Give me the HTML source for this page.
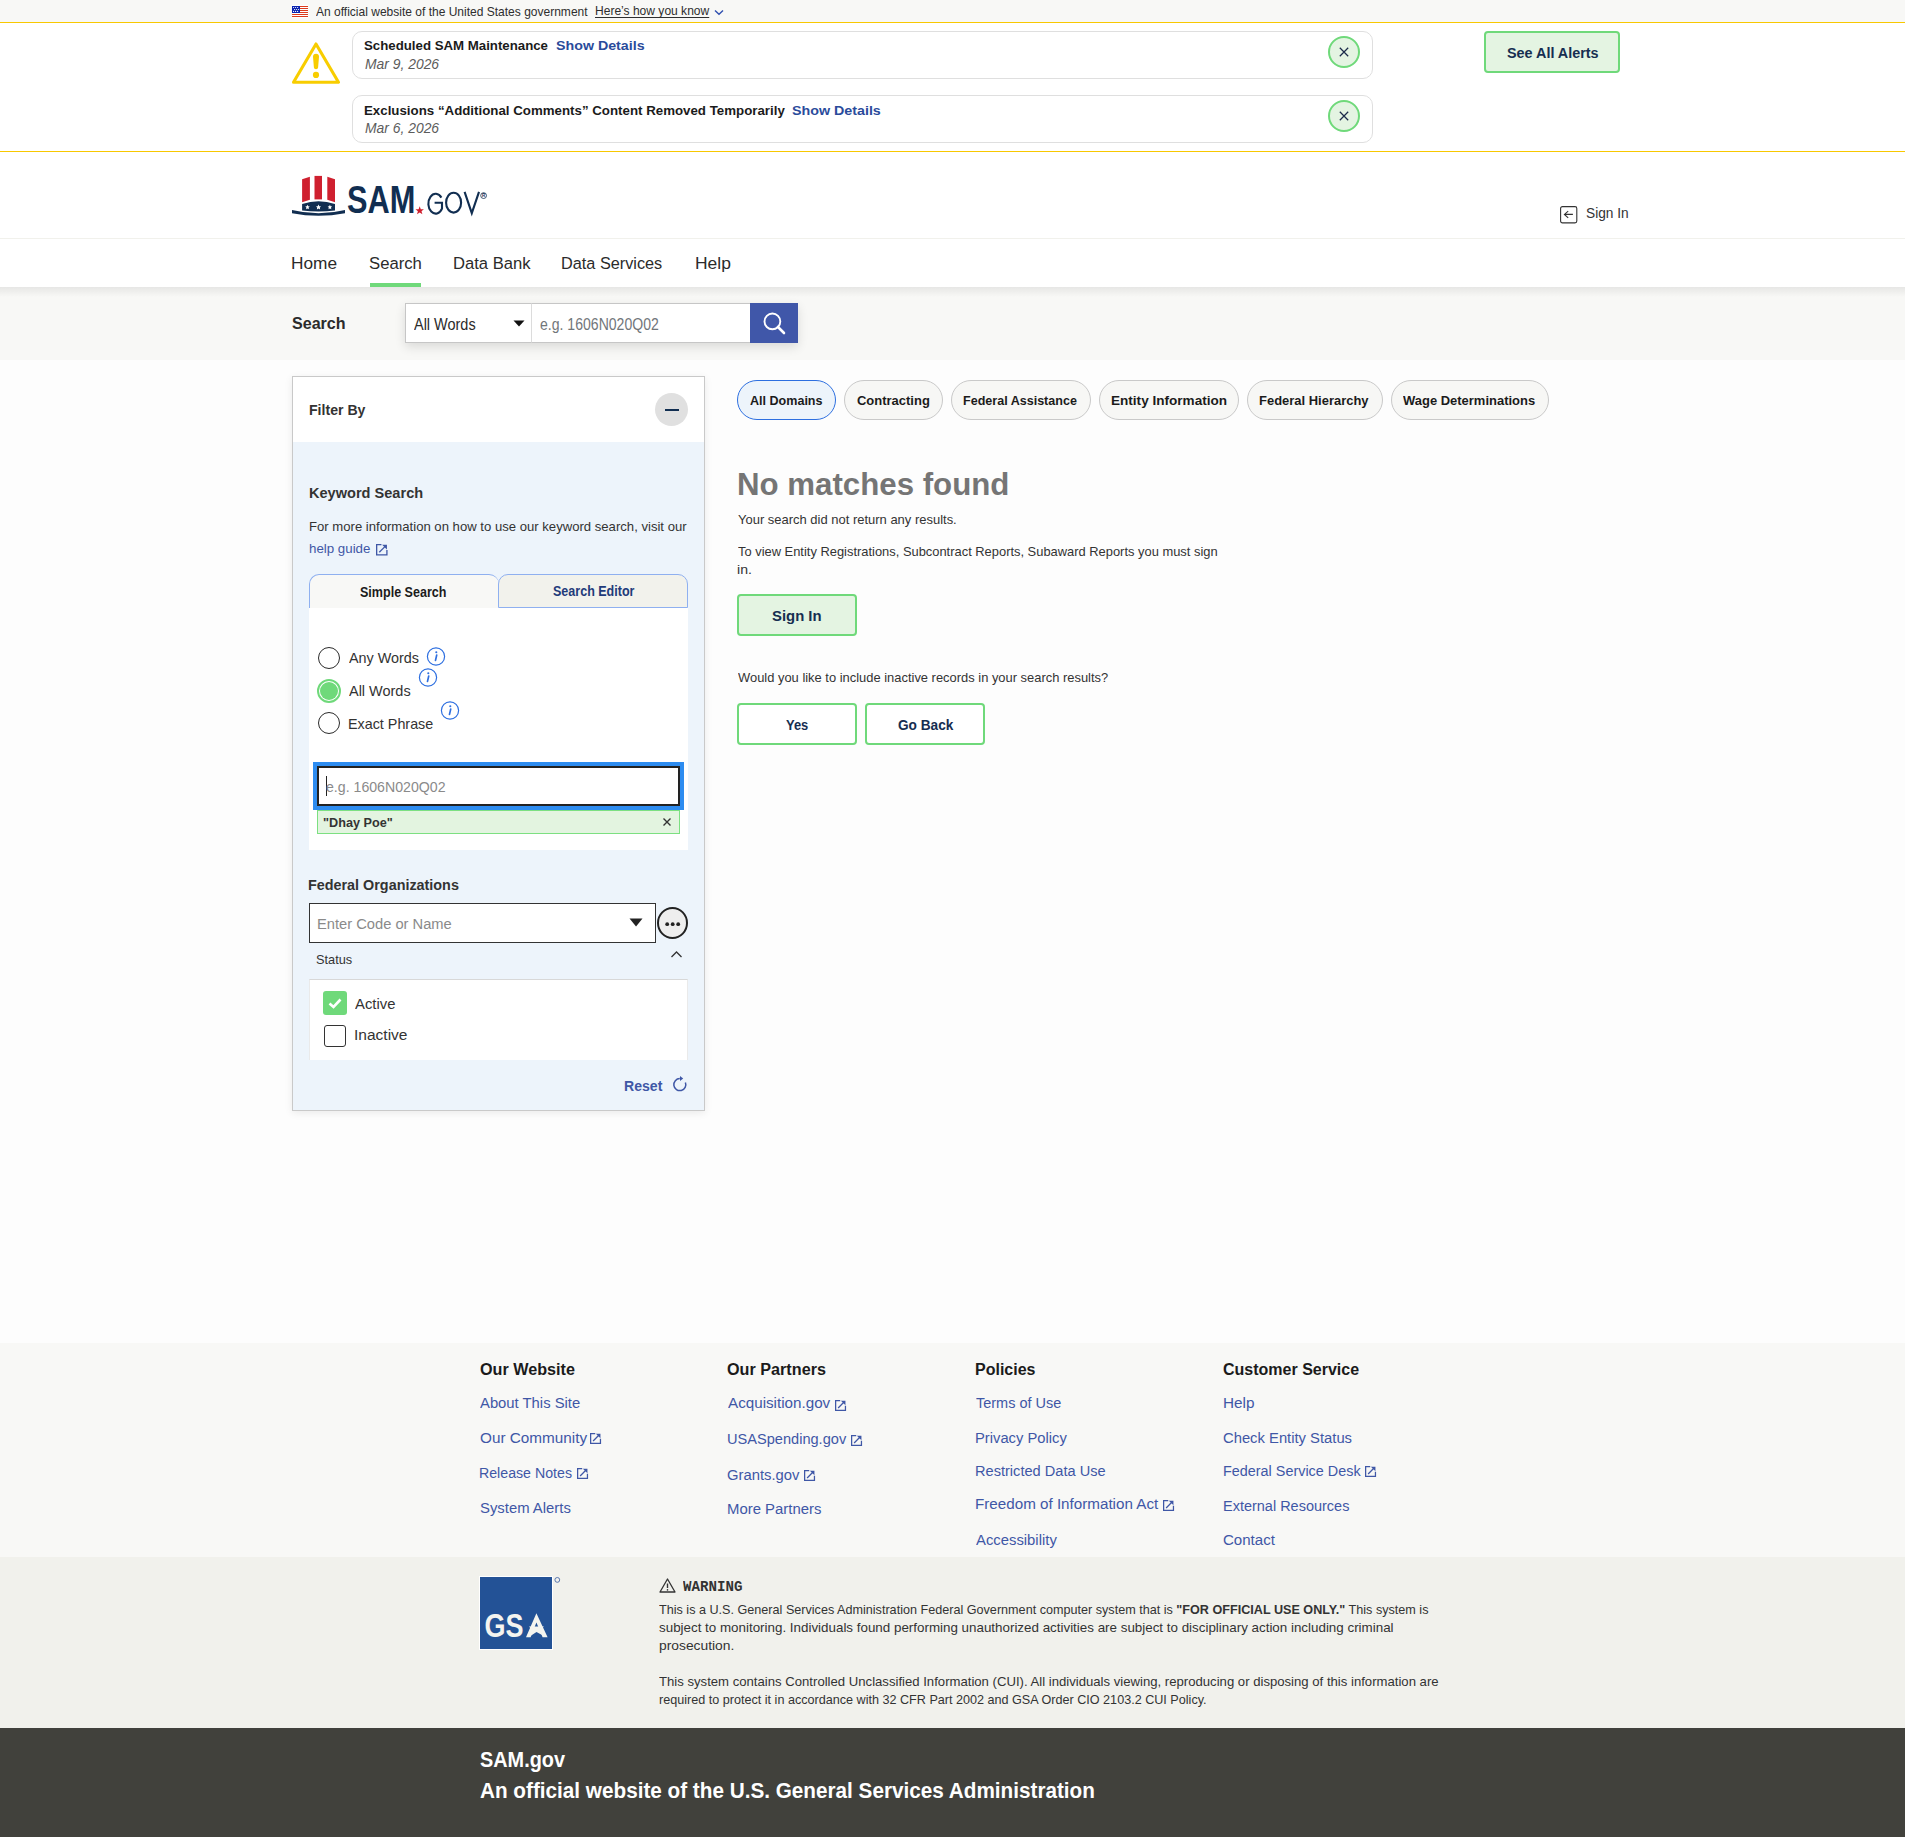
<!DOCTYPE html>
<html><head><meta charset="utf-8"><title>SAM.gov Search</title>
<style>
html,body{margin:0;padding:0;background:#fff;}
body{width:1905px;height:1837px;position:relative;overflow:hidden;font-family:"Liberation Sans",sans-serif;}
.t{position:absolute;white-space:nowrap;transform-origin:0 0;font-family:"Liberation Sans",sans-serif;}
.b{position:absolute;box-sizing:border-box;}
svg{position:absolute;overflow:visible;}
</style></head><body>
<!-- banner -->
<div class="b" style="left:0;top:0;width:1905px;height:22px;background:#f8f8f6;"></div>
<div class="b" style="left:0;top:22px;width:1905px;height:1px;background:#f8c800;"></div>
<svg style="left:292px;top:5px" width="16" height="13" viewBox="0 0 16 13">
 <rect width="16" height="13" fill="#fff"/>
 <g fill="#dc3a1c"><rect y="1" width="16" height="1"/><rect y="3" width="16" height="1"/><rect y="5" width="16" height="1"/><rect y="7" width="16" height="1"/><rect y="9" width="16" height="1"/><rect y="11" width="16" height="1"/></g>
 <rect y="1" width="8" height="7" fill="#0a24b0"/>
 <g fill="#fff"><circle cx="1.6" cy="2.5" r=".6"/><circle cx="3.6" cy="2.5" r=".6"/><circle cx="5.6" cy="2.5" r=".6"/><circle cx="2.6" cy="4.5" r=".6"/><circle cx="4.6" cy="4.5" r=".6"/><circle cx="6.6" cy="4.5" r=".6"/><circle cx="1.6" cy="6.4" r=".6"/><circle cx="3.6" cy="6.4" r=".6"/><circle cx="5.6" cy="6.4" r=".6"/></g>
</svg>
<svg style="left:714px;top:9px" width="10" height="7" viewBox="0 0 10 7"><path d="M1 1.5 L5 5.3 L9 1.5" fill="none" stroke="#3050b0" stroke-width="1.4"/></svg>
<!-- alerts -->
<div class="b" style="left:0;top:151px;width:1905px;height:1px;background:#f8c800;"></div>
<svg style="left:291px;top:41px" width="50" height="44" viewBox="0 0 50 44"><path d="M25 3 L47.5 41.2 L2.5 41.2 Z" fill="none" stroke="#f8cd00" stroke-width="3.1" stroke-linejoin="round"/><path d="M22 15.8 Q22 12.8 25 12.8 Q28 12.8 28 15.8 L27.1 26.6 Q27 28.2 25 28.2 Q23 28.2 22.9 26.6 Z" fill="#f8cd00"/><circle cx="25" cy="33.9" r="3.1" fill="#f8cd00"/></svg>
<div class="b" style="left:352px;top:31px;width:1021px;height:48px;border:1px solid #dfdfdf;border-radius:10px;"></div>
<div class="b" style="left:352px;top:95px;width:1021px;height:48px;border:1px solid #dfdfdf;border-radius:10px;"></div>
<div class="b" style="left:1328px;top:36px;width:32px;height:32px;border:2px solid #6fd97a;border-radius:50%;background:#e4f4e2;"></div>
<div class="b" style="left:1328px;top:100px;width:32px;height:32px;border:2px solid #6fd97a;border-radius:50%;background:#e4f4e2;"></div>
<svg style="left:1338px;top:46px" width="12" height="12" viewBox="0 0 12 12"><path d="M1.8 1.8 L10.2 10.2 M10.2 1.8 L1.8 10.2" stroke="#1b2a4a" stroke-width="1.25"/></svg>
<svg style="left:1338px;top:110px" width="12" height="12" viewBox="0 0 12 12"><path d="M1.8 1.8 L10.2 10.2 M10.2 1.8 L1.8 10.2" stroke="#1b2a4a" stroke-width="1.25"/></svg>
<div class="b" style="left:1484px;top:31px;width:136px;height:42px;border:2px solid #6fd97a;border-radius:4px;background:#e4f4e2;"></div>
<!-- header -->
<div class="b" style="left:0;top:238px;width:1905px;height:1px;background:#f1f1ec;"></div>
<div class="b" style="left:0;top:287px;width:1905px;height:73px;background:#f8f8f6;"></div>
<div class="b" style="left:0;top:287px;width:1905px;height:10px;background:linear-gradient(rgba(0,0,0,0.07),rgba(0,0,0,0));"></div>
<div class="b" style="left:370px;top:283px;width:51px;height:4px;background:#6fd97a;"></div>
<!-- logo -->
<svg style="left:288px;top:170px" width="140" height="52" viewBox="0 0 140 52">
 <path d="M14.1 9.2 L21.9 6.8 L21.9 29.8 L14.1 32.3 Z" fill="#cf202f"/>
 <path d="M26.5 5.9 L34 5.9 L34 29.4 L26.5 29.4 Z" fill="#cf202f"/>
 <path d="M39.3 6.8 L47 9.2 L47 32.3 L39.3 29.8 Z" fill="#cf202f"/>
 <path d="M14.1 34 Q30.5 28.5 47 34 L47 40.6 Q30.5 42.5 14.1 40.6 Z" fill="#112e51"/>
 <path d="M4 40 Q30.5 46.5 57 40 L57 43.2 Q30.5 48.5 4 43.2 Z" fill="#112e51"/>
 <g fill="#fff"><path d="M19.5 34.8 l.7 1.5 1.6.2 -1.2 1.1 .3 1.6 -1.4-.8 -1.4.8 .3-1.6 -1.2-1.1 1.6-.2z"/><path d="M30.5 34.5 l.8 1.7 1.8.2 -1.3 1.2 .3 1.8 -1.6-.9 -1.6.9 .3-1.8 -1.3-1.2 1.8-.2z"/><path d="M41.9 34.8 l.7 1.5 1.6.2 -1.2 1.1 .3 1.6 -1.4-.8 -1.4.8 .3-1.6 -1.2-1.1 1.6-.2z"/></g>
 <path d="M131.7 36.3 l1.1 2.9 3.1.1 -2.4 1.9 .9 3 -2.7-1.7 -2.7 1.7 .9-3 -2.4-1.9 3.1-.1z" fill="#cf202f"/>
</svg>
<svg style="left:420px;top:185px" width="70" height="32" viewBox="0 0 70 32">
 <path d="M21.4 12.6 A7.3 9.9 0 1 0 22.0 23.6 V17.8 H14.6" fill="none" stroke="#112e51" stroke-width="2.1"/>
 <ellipse cx="33.6" cy="17.65" rx="7.5" ry="9.95" fill="none" stroke="#112e51" stroke-width="2.1"/>
 <path d="M44.6 6.8 L51.8 28.2 L59.0 6.8" fill="none" stroke="#112e51" stroke-width="2.1"/>
 <circle cx="63.6" cy="10.6" r="2.9" fill="none" stroke="#112e51" stroke-width=".8"/>
 <text x="63.6" y="12.3" text-anchor="middle" font-family="Liberation Sans" font-size="4.6" font-weight="700" fill="#112e51">R</text>
</svg>
<!-- sign in icon -->
<svg style="left:1559px;top:205px" width="20" height="19" viewBox="0 0 20 19"><rect x="1.6" y="1.6" width="16.2" height="16.3" rx="1.8" fill="none" stroke="#333" stroke-width="1.1"/><path d="M13.9 9.4 H5.4 M9.2 6.1 L5.4 9.4 L9.2 12.9" fill="none" stroke="#333" stroke-width="1.1"/></svg>
<!-- search band -->
<div class="b" style="left:405px;top:303px;width:393px;height:40px;box-shadow:0 4px 10px rgba(0,0,0,0.12);"></div>
<div class="b" style="left:405px;top:303px;width:127px;height:40px;border:1px solid #c6c6c6;background:#fff;"></div>
<div class="b" style="left:531px;top:303px;width:220px;height:40px;border:1px solid #c6c6c6;border-left:1px solid #dcdcdc;background:#fff;"></div>
<svg style="left:513px;top:320px" width="12" height="7" viewBox="0 0 12 7"><path d="M0.5 0.5 L11.5 0.5 L6 6.5 Z" fill="#111"/></svg>
<div class="b" style="left:750px;top:303px;width:48px;height:40px;background:#4057a9;"></div>
<svg style="left:755px;top:308px" width="40" height="30" viewBox="0 0 40 30"><circle cx="17.4" cy="13.4" r="7.9" fill="none" stroke="#fff" stroke-width="1.9"/><path d="M23 19 L29 25" stroke="#fff" stroke-width="2.6" stroke-linecap="round"/></svg>
<div class="b" style="left:0;top:360px;width:1905px;height:983px;background:#fdfdfd;"></div>
<!-- filter panel -->
<div class="b" style="left:292px;top:376px;width:413px;height:735px;border:1px solid #c9c9c9;background:#edf4fb;box-shadow:0 2px 8px rgba(0,0,0,0.08);"></div>
<div class="b" style="left:293px;top:377px;width:411px;height:65px;background:#fff;"></div>
<div class="b" style="left:655px;top:393px;width:33px;height:33px;border-radius:50%;background:#e0e0e0;"></div>
<div class="b" style="left:665px;top:409px;width:14px;height:2px;background:#112e51;"></div>
<!-- tabs -->
<div class="b" style="left:309px;top:574px;width:190px;height:36px;background:#f8f8f6;border:1px solid #8fb0f0;border-bottom:none;border-right:none;border-radius:10px 10px 0 0;"></div>
<div class="b" style="left:498px;top:574px;width:190px;height:34px;background:#f2f2ec;border:1px solid #8fb0f0;border-radius:10px 10px 0 0;"></div>
<div class="b" style="left:309px;top:608px;width:379px;height:242px;background:#fff;"></div>
<!-- radios -->
<div class="b" style="left:318px;top:647px;width:22px;height:22px;border:1.5px solid #2b2b2b;border-radius:50%;"></div>
<div class="b" style="left:317px;top:679px;width:24px;height:24px;border:2px solid #6fd97a;border-radius:50%;background:#fff;"></div>
<div class="b" style="left:320px;top:682px;width:18px;height:18px;border-radius:50%;background:#6fd97a;"></div>
<div class="b" style="left:318px;top:712px;width:22px;height:22px;border:1.5px solid #2b2b2b;border-radius:50%;"></div>
<svg style="left:426px;top:647px" width="20" height="20" viewBox="0 0 20 20"><circle cx="10" cy="9.5" r="8.6" fill="none" stroke="#2e6fe0" stroke-width="1.2"/><circle cx="10.3" cy="5.2" r="1.05" fill="#2e6fe0"/><path d="M10.7 8.1 L9.5 13.4" stroke="#2e6fe0" stroke-width="1.7" stroke-linecap="round"/></svg>
<svg style="left:418px;top:668px" width="20" height="20" viewBox="0 0 20 20"><circle cx="10" cy="9.5" r="8.6" fill="none" stroke="#2e6fe0" stroke-width="1.2"/><circle cx="10.3" cy="5.2" r="1.05" fill="#2e6fe0"/><path d="M10.7 8.1 L9.5 13.4" stroke="#2e6fe0" stroke-width="1.7" stroke-linecap="round"/></svg>
<svg style="left:440px;top:701px" width="20" height="20" viewBox="0 0 20 20"><circle cx="10" cy="9.5" r="8.6" fill="none" stroke="#2e6fe0" stroke-width="1.2"/><circle cx="10.3" cy="5.2" r="1.05" fill="#2e6fe0"/><path d="M10.7 8.1 L9.5 13.4" stroke="#2e6fe0" stroke-width="1.7" stroke-linecap="round"/></svg>
<!-- focused input -->
<div class="b" style="left:313px;top:762px;width:371px;height:48px;background:#2d8cf0;"></div>
<div class="b" style="left:317px;top:766px;width:363px;height:40px;background:#fff;border:2px solid #222;"></div>
<div class="b" style="left:326px;top:776px;width:1px;height:20px;background:#222;"></div>
<div class="b" style="left:317px;top:810px;width:363px;height:24px;background:#e3f4e0;border:1px solid #7ce081;"></div>
<svg style="left:662px;top:817px" width="10" height="10" viewBox="0 0 10 10"><path d="M1.5 1.5 L8.5 8.5 M8.5 1.5 L1.5 8.5" stroke="#333" stroke-width="1.4"/></svg>
<!-- fed org -->
<div class="b" style="left:309px;top:903px;width:347px;height:40px;background:#fff;border:1.5px solid #333;"></div>
<svg style="left:629px;top:918px" width="14" height="9" viewBox="0 0 14 9"><path d="M0.5 0.5 L13.5 0.5 L7 8.5 Z" fill="#222"/></svg>
<div class="b" style="left:657px;top:907px;width:31px;height:32px;border:2px solid #222;border-radius:50%;background:#eeeeee;"></div>
<svg style="left:663px;top:920px" width="20" height="8" viewBox="0 0 20 8"><circle cx="4.2" cy="4.2" r="1.9" fill="#222"/><circle cx="9.7" cy="4.2" r="1.9" fill="#222"/><circle cx="15.2" cy="4.2" r="1.9" fill="#222"/></svg>
<svg style="left:670px;top:950px" width="13" height="9" viewBox="0 0 13 9"><path d="M1.5 7 L6.5 2 L11.5 7" fill="none" stroke="#333" stroke-width="1.3"/></svg>
<div class="b" style="left:309px;top:979px;width:379px;height:81px;background:#fff;border-top:1.5px solid #d8d8d8;border-left:1px solid #eaeaea;border-right:1px solid #eaeaea;"></div>
<div class="b" style="left:323px;top:991px;width:24px;height:24px;border-radius:3px;background:#6fd97a;"></div>
<svg style="left:323px;top:991px" width="24" height="24" viewBox="0 0 24 24"><path d="M6.5 12.5 L10.5 16 L17.5 8.5" fill="none" stroke="#fff" stroke-width="2.6"/></svg>
<div class="b" style="left:324px;top:1025px;width:22px;height:22px;border:1.5px solid #333;border-radius:3px;background:#fff;"></div>
<svg style="left:664px;top:1068px" width="30" height="30" viewBox="0 0 30 30"><path d="M21.4 14.4 A6 6 0 1 1 15.8 10.6" fill="none" stroke="#3f57a6" stroke-width="1.5"/><path d="M16 8 L19.2 10.6 L16 13.1 Z" fill="#3f57a6"/></svg>
<!-- help guide ext icon -->

<!-- chips -->
<div class="b" style="left:737px;top:380px;width:99px;height:40px;border:1.5px solid #2d6fe0;border-radius:20px;background:#edf4fb;"></div>
<div class="b" style="left:844px;top:380px;width:99px;height:40px;border:1px solid #c9c9c9;border-radius:20px;background:#f7f7f5;"></div>
<div class="b" style="left:951px;top:380px;width:140px;height:40px;border:1px solid #c9c9c9;border-radius:20px;background:#f7f7f5;"></div>
<div class="b" style="left:1099px;top:380px;width:140px;height:40px;border:1px solid #c9c9c9;border-radius:20px;background:#f7f7f5;"></div>
<div class="b" style="left:1247px;top:380px;width:136px;height:40px;border:1px solid #c9c9c9;border-radius:20px;background:#f7f7f5;"></div>
<div class="b" style="left:1391px;top:380px;width:158px;height:40px;border:1px solid #c9c9c9;border-radius:20px;background:#f7f7f5;"></div>
<!-- main buttons -->
<div class="b" style="left:737px;top:594px;width:120px;height:42px;border:2px solid #6fd97a;border-radius:4px;background:#e4f4e2;"></div>
<div class="b" style="left:737px;top:703px;width:120px;height:42px;border:2px solid #6fd97a;border-radius:4px;background:#fff;"></div>
<div class="b" style="left:865px;top:703px;width:120px;height:42px;border:2px solid #6fd97a;border-radius:4px;background:#fff;"></div>
<!-- footer -->
<div class="b" style="left:0;top:1343px;width:1905px;height:214px;background:#f8f8f6;"></div>
<div class="b" style="left:0;top:1557px;width:1905px;height:171px;background:#f1f1ec;"></div>
<div class="b" style="left:0;top:1728px;width:1905px;height:109px;background:#41413c;"></div>
<!-- ext link icons footer -->
<svg style="left:590px;top:1433px" width="11.5" height="11.5" viewBox="0 0 11 11"><path d="M5 0.6 H0.6 V10 H10 V5.6" fill="none" stroke="#3f57a6" stroke-width="1.2"/><path d="M3 7.6 L8.9 1.7" stroke="#3f57a6" stroke-width="1.2"/><path d="M5.6 0.6 H10 V5 Z" fill="#3f57a6"/></svg>
<svg style="left:577px;top:1468px" width="11.5" height="11.5" viewBox="0 0 11 11"><path d="M5 0.6 H0.6 V10 H10 V5.6" fill="none" stroke="#3f57a6" stroke-width="1.2"/><path d="M3 7.6 L8.9 1.7" stroke="#3f57a6" stroke-width="1.2"/><path d="M5.6 0.6 H10 V5 Z" fill="#3f57a6"/></svg>
<svg style="left:835px;top:1400px" width="11.5" height="11.5" viewBox="0 0 11 11"><path d="M5 0.6 H0.6 V10 H10 V5.6" fill="none" stroke="#3f57a6" stroke-width="1.2"/><path d="M3 7.6 L8.9 1.7" stroke="#3f57a6" stroke-width="1.2"/><path d="M5.6 0.6 H10 V5 Z" fill="#3f57a6"/></svg>
<svg style="left:851px;top:1435px" width="11.5" height="11.5" viewBox="0 0 11 11"><path d="M5 0.6 H0.6 V10 H10 V5.6" fill="none" stroke="#3f57a6" stroke-width="1.2"/><path d="M3 7.6 L8.9 1.7" stroke="#3f57a6" stroke-width="1.2"/><path d="M5.6 0.6 H10 V5 Z" fill="#3f57a6"/></svg>
<svg style="left:804px;top:1470px" width="11.5" height="11.5" viewBox="0 0 11 11"><path d="M5 0.6 H0.6 V10 H10 V5.6" fill="none" stroke="#3f57a6" stroke-width="1.2"/><path d="M3 7.6 L8.9 1.7" stroke="#3f57a6" stroke-width="1.2"/><path d="M5.6 0.6 H10 V5 Z" fill="#3f57a6"/></svg>
<svg style="left:1163px;top:1500px" width="11.5" height="11.5" viewBox="0 0 11 11"><path d="M5 0.6 H0.6 V10 H10 V5.6" fill="none" stroke="#3f57a6" stroke-width="1.2"/><path d="M3 7.6 L8.9 1.7" stroke="#3f57a6" stroke-width="1.2"/><path d="M5.6 0.6 H10 V5 Z" fill="#3f57a6"/></svg>
<svg style="left:1365px;top:1466px" width="11.5" height="11.5" viewBox="0 0 11 11"><path d="M5 0.6 H0.6 V10 H10 V5.6" fill="none" stroke="#3f57a6" stroke-width="1.2"/><path d="M3 7.6 L8.9 1.7" stroke="#3f57a6" stroke-width="1.2"/><path d="M5.6 0.6 H10 V5 Z" fill="#3f57a6"/></svg>
<svg style="left:375.5px;top:543.5px" width="12" height="12" viewBox="0 0 11 11"><path d="M5 0.6 H0.6 V10 H10 V5.6" fill="none" stroke="#3f57a6" stroke-width="1.2"/><path d="M3 7.6 L8.9 1.7" stroke="#3f57a6" stroke-width="1.2"/><path d="M5.6 0.6 H10 V5 Z" fill="#3f57a6"/></svg>
<!-- GSA logo -->
<div class="b" style="left:479px;top:1576px;width:74px;height:74px;background:#fff;"></div>
<div class="b" style="left:480px;top:1577px;width:72px;height:72px;background:#235296;"></div>
<svg style="left:480px;top:1577px" width="82" height="72" viewBox="0 0 82 72">
 <text x="4.6" y="60.2" font-family="Liberation Sans" font-weight="700" font-size="33.5" fill="#f4f4ef" textLength="39" lengthAdjust="spacingAndGlyphs">GS</text>
 <path d="M56.4 36.2 L67.6 60.2 L62.6 60.2 L56.4 45.5 L50.6 60.2 L46 60.2 Z" fill="#f4f4ef"/>
 <path d="M49 49.5 L64 49.5 L60.5 52.8 L62 58 L56.5 55 L48.5 60.2 L52 53 Z" fill="#f4f4ef"/>
 <circle cx="77.3" cy="2.9" r="2.4" fill="none" stroke="#4a6aa8" stroke-width=".9"/>
</svg>
<svg style="left:659px;top:1578px" width="17" height="15" viewBox="0 0 17 15"><path d="M8.5 1 L16 14 L1 14 Z" fill="none" stroke="#333" stroke-width="1.3" stroke-linejoin="round"/><path d="M8.5 5.5 V10" stroke="#333" stroke-width="1.4"/><circle cx="8.5" cy="11.9" r=".8" fill="#333"/></svg>

<span class="t" id="t0" style="left:316.00px;top:6.16px;font-size:12.8px;line-height:12.8px;font-weight:400;color:#2e2e2e;transform:scaleX(0.9388);">An official website of the United States government</span>
<span class="t" id="t1" style="left:595.06px;top:5.36px;font-size:12.8px;line-height:12.8px;font-weight:400;color:#2e2e2e;transform:scaleX(0.9410);text-decoration:underline;text-underline-offset:1.5px;">Here’s how you know</span>
<span class="t" id="t2" style="left:363.99px;top:39.28px;font-size:13.6px;line-height:13.6px;font-weight:700;color:#1b1b1b;transform:scaleX(0.9743);">Scheduled SAM Maintenance</span>
<span class="t" id="t3" style="left:556.19px;top:39.28px;font-size:13.6px;line-height:13.6px;font-weight:700;color:#2a4b9b;transform:scaleX(1.0472);">Show Details</span>
<span class="t" id="t4" style="left:365.00px;top:57.92px;font-size:13.8px;line-height:13.8px;font-weight:400;color:#5c5c5c;transform:scaleX(1.0062);font-style:italic;">Mar 9, 2026</span>
<span class="t" id="t5" style="left:364.00px;top:104.48px;font-size:13.6px;line-height:13.6px;font-weight:700;color:#1b1b1b;transform:scaleX(0.9779);">Exclusions “Additional Comments” Content Removed Temporarily</span>
<span class="t" id="t6" style="left:791.80px;top:104.48px;font-size:13.6px;line-height:13.6px;font-weight:700;color:#2a4b9b;transform:scaleX(1.0495);">Show Details</span>
<span class="t" id="t7" style="left:365.00px;top:121.92px;font-size:13.8px;line-height:13.8px;font-weight:400;color:#5c5c5c;transform:scaleX(1.0062);font-style:italic;">Mar 6, 2026</span>
<span class="t" id="t8" style="left:1507.20px;top:46.26px;font-size:14.1px;line-height:14.1px;font-weight:700;color:#162e51;transform:scaleX(1.0197);">See All Alerts</span>
<span class="t" id="t9" style="left:1585.58px;top:205.67px;font-size:14.8px;line-height:14.8px;font-weight:400;color:#333;transform:scaleX(0.9258);">Sign In</span>
<span class="t" id="t10" style="left:291.41px;top:255.27px;font-size:17.4px;line-height:17.4px;font-weight:400;color:#2b2b2b;transform:scaleX(0.9931);">Home</span>
<span class="t" id="t11" style="left:368.97px;top:255.27px;font-size:17.4px;line-height:17.4px;font-weight:400;color:#2b2b2b;transform:scaleX(0.9596);">Search</span>
<span class="t" id="t12" style="left:453.25px;top:255.27px;font-size:17.4px;line-height:17.4px;font-weight:400;color:#2b2b2b;transform:scaleX(0.9540);">Data Bank</span>
<span class="t" id="t13" style="left:561.47px;top:255.27px;font-size:17.4px;line-height:17.4px;font-weight:400;color:#2b2b2b;transform:scaleX(0.9354);">Data Services</span>
<span class="t" id="t14" style="left:694.81px;top:255.27px;font-size:17.4px;line-height:17.4px;font-weight:400;color:#2b2b2b;transform:scaleX(1.0034);">Help</span>
<span class="t" id="t15" style="left:292.16px;top:315.41px;font-size:17px;line-height:17px;font-weight:700;color:#2b2b2b;transform:scaleX(0.9456);">Search</span>
<span class="t" id="t16" style="left:414.21px;top:316.59px;font-size:15.6px;line-height:15.6px;font-weight:400;color:#2b2b2b;transform:scaleX(0.9275);">All Words</span>
<span class="t" id="t17" style="left:540.40px;top:316.59px;font-size:15.6px;line-height:15.6px;font-weight:400;color:#71767a;transform:scaleX(0.9015);">e.g. 1606N020Q02</span>
<span class="t" id="t18" style="left:308.79px;top:403.41px;font-size:14.4px;line-height:14.4px;font-weight:700;color:#333;transform:scaleX(0.9799);">Filter By</span>
<span class="t" id="t19" style="left:308.63px;top:484.90px;font-size:15px;line-height:15px;font-weight:700;color:#333;transform:scaleX(0.9709);">Keyword Search</span>
<span class="t" id="t20" style="left:308.61px;top:520.34px;font-size:13.3px;line-height:13.3px;font-weight:400;color:#333;transform:scaleX(0.9864);">For more information on how to use our keyword search, visit our</span>
<span class="t" id="t21" style="left:308.59px;top:541.74px;font-size:13.3px;line-height:13.3px;font-weight:400;color:#3f57a6;transform:scaleX(1.0006);">help guide</span>
<span class="t" id="t22" style="left:360.20px;top:586.32px;font-size:13.8px;line-height:13.8px;font-weight:700;color:#1b1b1b;transform:scaleX(0.9085);">Simple Search</span>
<span class="t" id="t23" style="left:552.60px;top:585.32px;font-size:13.8px;line-height:13.8px;font-weight:700;color:#1f3b7a;transform:scaleX(0.9078);">Search Editor</span>
<span class="t" id="t24" style="left:349.20px;top:650.52px;font-size:14.5px;line-height:14.5px;font-weight:400;color:#333;transform:scaleX(0.9916);">Any Words</span>
<span class="t" id="t25" style="left:349.21px;top:683.52px;font-size:14.5px;line-height:14.5px;font-weight:400;color:#333;transform:scaleX(0.9981);">All Words</span>
<span class="t" id="t26" style="left:348.21px;top:716.72px;font-size:14.5px;line-height:14.5px;font-weight:400;color:#333;transform:scaleX(0.9887);">Exact Phrase</span>
<span class="t" id="t27" style="left:325.80px;top:779.30px;font-size:15px;line-height:15px;font-weight:400;color:#8a8a8a;transform:scaleX(0.9429);">e.g. 1606N020Q02</span>
<span class="t" id="t28" style="left:322.59px;top:816.88px;font-size:12.9px;line-height:12.9px;font-weight:700;color:#333;transform:scaleX(0.9827);">&quot;Dhay Poe&quot;</span>
<span class="t" id="t29" style="left:308.19px;top:877.72px;font-size:14.5px;line-height:14.5px;font-weight:700;color:#333;transform:scaleX(0.9908);">Federal Organizations</span>
<span class="t" id="t30" style="left:317.25px;top:916.08px;font-size:15.5px;line-height:15.5px;font-weight:400;color:#8a8a8a;transform:scaleX(0.9479);">Enter Code or Name</span>
<span class="t" id="t31" style="left:316.35px;top:952.99px;font-size:13px;line-height:13px;font-weight:400;color:#333;transform:scaleX(0.9813);">Status</span>
<span class="t" id="t32" style="left:355.00px;top:996.13px;font-size:15.2px;line-height:15.2px;font-weight:400;color:#333;transform:scaleX(0.9777);">Active</span>
<span class="t" id="t33" style="left:353.98px;top:1027.33px;font-size:15.2px;line-height:15.2px;font-weight:400;color:#333;transform:scaleX(1.0217);">Inactive</span>
<span class="t" id="t34" style="left:624.16px;top:1079.15px;font-size:14px;line-height:14px;font-weight:700;color:#3f57a6;transform:scaleX(1.0051);">Reset</span>
<span class="t" id="t35" style="left:750.21px;top:395.36px;font-size:12.8px;line-height:12.8px;font-weight:700;color:#1b1b1b;transform:scaleX(0.9806);">All Domains</span>
<span class="t" id="t36" style="left:857.01px;top:395.36px;font-size:12.8px;line-height:12.8px;font-weight:700;color:#1b1b1b;transform:scaleX(1.0144);">Contracting</span>
<span class="t" id="t37" style="left:963.19px;top:395.36px;font-size:12.8px;line-height:12.8px;font-weight:700;color:#1b1b1b;transform:scaleX(0.9802);">Federal Assistance</span>
<span class="t" id="t38" style="left:1110.78px;top:395.36px;font-size:12.8px;line-height:12.8px;font-weight:700;color:#1b1b1b;transform:scaleX(1.0598);">Entity Information</span>
<span class="t" id="t39" style="left:1259.38px;top:395.36px;font-size:12.8px;line-height:12.8px;font-weight:700;color:#1b1b1b;transform:scaleX(1.0131);">Federal Hierarchy</span>
<span class="t" id="t40" style="left:1403.40px;top:395.36px;font-size:12.8px;line-height:12.8px;font-weight:700;color:#1b1b1b;transform:scaleX(1.0135);">Wage Determinations</span>
<span class="t" id="t41" style="left:736.56px;top:469.81px;font-size:30.7px;line-height:30.7px;font-weight:700;color:#757575;transform:scaleX(1.0177);">No matches found</span>
<span class="t" id="t42" style="left:738.00px;top:514.33px;font-size:12.6px;line-height:12.6px;font-weight:400;color:#333;transform:scaleX(1.0300);">Your search did not return any results.</span>
<span class="t" id="t43" style="left:738.00px;top:546.13px;font-size:12.6px;line-height:12.6px;font-weight:400;color:#333;transform:scaleX(1.0242);">To view Entity Registrations, Subcontract Reports, Subaward Reports you must sign</span>
<span class="t" id="t44" style="left:736.91px;top:564.33px;font-size:12.6px;line-height:12.6px;font-weight:400;color:#333;transform:scaleX(1.1171);">in.</span>
<span class="t" id="t45" style="left:772.18px;top:608.64px;font-size:14.6px;line-height:14.6px;font-weight:700;color:#162e51;transform:scaleX(1.0189);">Sign In</span>
<span class="t" id="t46" style="left:738.00px;top:672.33px;font-size:12.6px;line-height:12.6px;font-weight:400;color:#333;transform:scaleX(1.0256);">Would you like to include inactive records in your search results?</span>
<span class="t" id="t47" style="left:786.39px;top:718.44px;font-size:14.6px;line-height:14.6px;font-weight:700;color:#162e51;transform:scaleX(0.8872);">Yes</span>
<span class="t" id="t48" style="left:897.80px;top:718.44px;font-size:14.6px;line-height:14.6px;font-weight:700;color:#162e51;transform:scaleX(0.9354);">Go Back</span>
<span class="t" id="t49" style="left:479.98px;top:1361.58px;font-size:16.8px;line-height:16.8px;font-weight:700;color:#1b1b1b;transform:scaleX(0.9636);">Our Website</span>
<span class="t" id="t50" style="left:726.79px;top:1361.58px;font-size:16.8px;line-height:16.8px;font-weight:700;color:#1b1b1b;transform:scaleX(0.9643);">Our Partners</span>
<span class="t" id="t51" style="left:975.25px;top:1361.58px;font-size:16.8px;line-height:16.8px;font-weight:700;color:#1b1b1b;transform:scaleX(0.9534);">Policies</span>
<span class="t" id="t52" style="left:1223.19px;top:1361.58px;font-size:16.8px;line-height:16.8px;font-weight:700;color:#1b1b1b;transform:scaleX(0.9539);">Customer Service</span>
<span class="t" id="t53" style="left:479.99px;top:1395.33px;font-size:15.2px;line-height:15.2px;font-weight:400;color:#3f57a6;transform:scaleX(0.9752);">About This Site</span>
<span class="t" id="t54" style="left:479.98px;top:1429.73px;font-size:15.2px;line-height:15.2px;font-weight:400;color:#3f57a6;transform:scaleX(1.0065);">Our Community</span>
<span class="t" id="t55" style="left:479.07px;top:1465.13px;font-size:15.2px;line-height:15.2px;font-weight:400;color:#3f57a6;transform:scaleX(0.9332);">Release Notes</span>
<span class="t" id="t56" style="left:479.96px;top:1499.93px;font-size:15.2px;line-height:15.2px;font-weight:400;color:#3f57a6;transform:scaleX(0.9787);">System Alerts</span>
<span class="t" id="t57" style="left:727.80px;top:1395.33px;font-size:15.2px;line-height:15.2px;font-weight:400;color:#3f57a6;transform:scaleX(1.0005);">Acquisition.gov</span>
<span class="t" id="t58" style="left:726.84px;top:1431.13px;font-size:15.2px;line-height:15.2px;font-weight:400;color:#3f57a6;transform:scaleX(0.9602);">USASpending.gov</span>
<span class="t" id="t59" style="left:726.78px;top:1466.53px;font-size:15.2px;line-height:15.2px;font-weight:400;color:#3f57a6;transform:scaleX(0.9751);">Grants.gov</span>
<span class="t" id="t60" style="left:726.82px;top:1500.93px;font-size:15.2px;line-height:15.2px;font-weight:400;color:#3f57a6;transform:scaleX(0.9810);">More Partners</span>
<span class="t" id="t61" style="left:976.20px;top:1395.33px;font-size:15.2px;line-height:15.2px;font-weight:400;color:#3f57a6;transform:scaleX(0.9528);">Terms of Use</span>
<span class="t" id="t62" style="left:975.23px;top:1429.73px;font-size:15.2px;line-height:15.2px;font-weight:400;color:#3f57a6;transform:scaleX(0.9710);">Privacy Policy</span>
<span class="t" id="t63" style="left:975.24px;top:1462.93px;font-size:15.2px;line-height:15.2px;font-weight:400;color:#3f57a6;transform:scaleX(0.9610);">Restricted Data Use</span>
<span class="t" id="t64" style="left:975.20px;top:1496.33px;font-size:15.2px;line-height:15.2px;font-weight:400;color:#3f57a6;transform:scaleX(1.0001);">Freedom of Information Act</span>
<span class="t" id="t65" style="left:976.20px;top:1531.93px;font-size:15.2px;line-height:15.2px;font-weight:400;color:#3f57a6;transform:scaleX(0.9770);">Accessibility</span>
<span class="t" id="t66" style="left:1223.18px;top:1395.33px;font-size:15.2px;line-height:15.2px;font-weight:400;color:#3f57a6;transform:scaleX(1.0076);">Help</span>
<span class="t" id="t67" style="left:1223.19px;top:1429.73px;font-size:15.2px;line-height:15.2px;font-weight:400;color:#3f57a6;transform:scaleX(0.9735);">Check Entity Status</span>
<span class="t" id="t68" style="left:1223.25px;top:1462.93px;font-size:15.2px;line-height:15.2px;font-weight:400;color:#3f57a6;transform:scaleX(0.9476);">Federal Service Desk</span>
<span class="t" id="t69" style="left:1223.25px;top:1498.13px;font-size:15.2px;line-height:15.2px;font-weight:400;color:#3f57a6;transform:scaleX(0.9536);">External Resources</span>
<span class="t" id="t70" style="left:1223.18px;top:1531.93px;font-size:15.2px;line-height:15.2px;font-weight:400;color:#3f57a6;transform:scaleX(0.9909);">Contact</span>
<span class="t" id="t71" style="left:683.07px;top:1580.27px;font-size:14px;line-height:14px;font-weight:700;color:#333;transform:scaleX(1.0115);font-family:'Liberation Mono', monospace;">WARNING</span>
<span class="t" id="t72" style="left:659.00px;top:1603.11px;font-size:13.1px;line-height:13.1px;font-weight:400;color:#333;transform:scaleX(0.9633);">This is a U.S. General Services Administration Federal Government computer system that is <b>&quot;FOR OFFICIAL USE ONLY.&quot;</b> This system is</span>
<span class="t" id="t73" style="left:659.00px;top:1620.71px;font-size:13.1px;line-height:13.1px;font-weight:400;color:#333;transform:scaleX(1.0215);">subject to monitoring. Individuals found performing unauthorized activities are subject to disciplinary action including criminal</span>
<span class="t" id="t74" style="left:658.98px;top:1638.91px;font-size:13.1px;line-height:13.1px;font-weight:400;color:#333;transform:scaleX(1.0557);">prosecution.</span>
<span class="t" id="t75" style="left:659.00px;top:1674.71px;font-size:13.1px;line-height:13.1px;font-weight:400;color:#333;transform:scaleX(1.0030);">This system contains Controlled Unclassified Information (CUI). All individuals viewing, reproducing or disposing of this information are</span>
<span class="t" id="t76" style="left:659.00px;top:1692.91px;font-size:13.1px;line-height:13.1px;font-weight:400;color:#333;transform:scaleX(0.9625);">required to protect it in accordance with 32 CFR Part 2002 and GSA Order CIO 2103.2 CUI Policy.</span>
<span class="t" id="t77" style="left:479.78px;top:1748.80px;font-size:22.2px;line-height:22.2px;font-weight:700;color:#fff;transform:scaleX(0.8959);">SAM.gov</span>
<span class="t" id="t78" style="left:479.80px;top:1779.60px;font-size:22.2px;line-height:22.2px;font-weight:700;color:#fff;transform:scaleX(0.9334);">An official website of the U.S. General Services Administration</span>
<span class="t" id="t79" style="left:346.82px;top:180.16px;font-size:39.5px;line-height:39.5px;font-weight:700;color:#112e51;transform:scaleX(0.7780);">SAM</span>
</body></html>
